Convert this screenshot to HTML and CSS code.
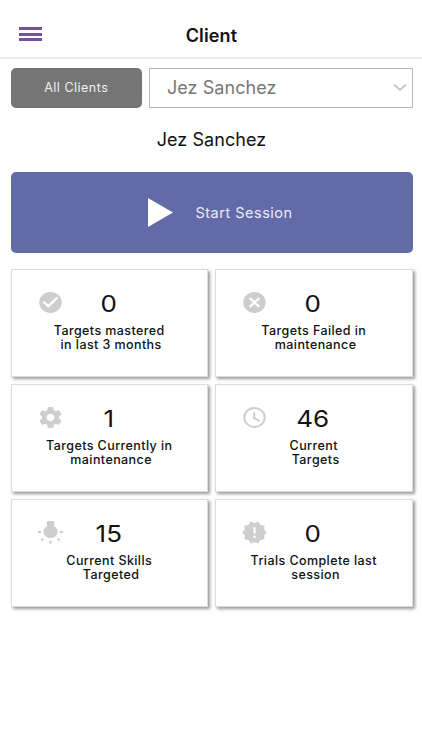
FILE: index.html
```
<!DOCTYPE html>
<html lang="en">
<head>
    <meta charset="UTF-8">
    <meta name="viewport" content="width=device-width, initial-scale=1.0">
    <title>Client</title>
    <link rel="stylesheet" href="styles.css">
</head>
<body>

    <header class="header">
        <button class="menu-button" aria-label="Menu">
            <span></span>
            <span></span>
            <span></span>
        </button>
        <h1>Client</h1>
    </header>

    <main class="container">
        <div class="client-bar">
            <button class="all-clients">All Clients</button>
            <div class="client-select">
                <span>Jez Sanchez</span>
                <svg class="chevron" viewBox="0 0 14 9"><path d="M1 1.5l6 5.5 6-5.5"/></svg>
            </div>
        </div>

        <h2 class="client-name">Jez Sanchez</h2>

        <button class="start-button">
            <svg class="play" viewBox="0 0 25 29" preserveAspectRatio="none"><path d="M0 0l25 14.5L0 29z"/></svg>
            <span>Start Session</span>
        </button>

        <section class="stats">
            <div class="card">
                <div class="card-top">
                    <svg class="icon" viewBox="0 0 24 24" preserveAspectRatio="none"><path d="M12 2C6.48 2 2 6.48 2 12s4.480 10 10 10 10-4.480 10-10S17.520 2 12 2zm-2 15l-5-5 1.410-1.410L10 14.170l7.590-7.590L19 8l-9 9z"/></svg>
                    <span class="number">0</span>
                </div>
                <p class="label">Targets mastered<br>&nbsp;in last 3 months</p>
            </div>

            <div class="card">
                <div class="card-top">
                    <svg class="icon" viewBox="0 0 24 24" preserveAspectRatio="none"><path d="M12 2C6.470 2 2 6.470 2 12s4.470 10 10 10 10-4.470 10-10S17.530 2 12 2zm5 13.590L15.590 17 12 13.410 8.410 17 7 15.590 10.590 12 7 8.410 8.410 7 12 10.590 15.590 7 17 8.410 13.410 12 17 15.590z"/></svg>
                    <span class="number">0</span>
                </div>
                <p class="label">Targets Failed in<br>&nbsp;maintenance</p>
            </div>

            <div class="card">
                <div class="card-top">
                    <svg class="icon" viewBox="0 0 24 24" preserveAspectRatio="none"><path d="M19.430 12.980c.04-.32.07-.64.07-.98s-.03-.66-.07-.98l2.110-1.650c.19-.15.24-.42.12-.64l-2-3.460c-.12-.22-.39-.3-.61-.22l-2.490 1c-.52-.4-1.080-.73-1.690-.98l-.38-2.650C14.460 2.180 14.250 2 14 2h-4c-.25 0-.46.18-.49.42l-.38 2.650c-.61.25-1.170.59-1.690.98l-2.490-1c-.23-.09-.49 0-.61.22l-2 3.460c-.13.22-.07.49.12.64l2.110 1.650c-.04.32-.07.65-.07.98s.03.66.07.98l-2.110 1.650c-.19.15-.24.42-.12.64l2 3.460c.12.22.39.3.61.22l2.490-1c.52.4 1.080.73 1.690.98l.38 2.650c.03.24.24.42.49.42h4c.25 0 .46-.18.49-.42l.38-2.650c.61-.25 1.170-.59 1.690-.98l2.490 1c.23.09.49 0 .61-.22l2-3.460c.12-.22.07-.49-.12-.64l-2.110-1.650zM12 15.500c-1.930 0-3.500-1.570-3.500-3.500s1.570-3.500 3.500-3.500 3.500 1.570 3.500 3.500-1.570 3.500-3.500 3.500z"/></svg>
                    <span class="number">1</span>
                </div>
                <p class="label">Targets Currently in<br>&nbsp;maintenance</p>
            </div>

            <div class="card">
                <div class="card-top">
                    <svg class="icon outline" viewBox="0 0 24 24" preserveAspectRatio="none"><circle cx="12" cy="12" r="9.100"/><path d="M11.750 7v5.600l4.600 2.800"/></svg>
                    <span class="number">46</span>
                </div>
                <p class="label">Current<br>&nbsp;Targets</p>
            </div>

            <div class="card">
                <div class="card-top">
                    <svg class="icon" viewBox="0 0 24 24" preserveAspectRatio="none">
                        <path d="M8.800 1h6.400v5.100c1.900 1 3.100 2.900 3.100 5a6.300 6.300 0 0 1-12.600 0c0-2.100 1.200-4 3.100-5z"/>
                        <path d="M.8 10.500h2.700v2H.8zM20.500 10.500h2.700v2h-2.700zM11 19.800h2v3h-2zM4.900 17.200l1.400 1.400-1.800 1.700-1.400-1.400zM19.100 17.200l1.800 1.700-1.400 1.400-1.800-1.700z"/>
                    </svg>
                    <span class="number">15</span>
                </div>
                <p class="label">Current Skills<br>&nbsp;Targeted</p>
            </div>

            <div class="card">
                <div class="card-top">
                    <svg class="icon" viewBox="0 0 24 24" preserveAspectRatio="none"><path d="M23 12l-2.440-2.780.34-3.680-3.610-.82-1.890-3.180L12 3 8.600 1.540 6.710 4.720l-3.610.81.34 3.680L1 12l2.440 2.780-.34 3.690 3.610.82 1.890 3.180L12 21l3.400 1.460 1.890-3.180 3.610-.82-.34-3.680L23 12zm-10 5h-2v-2h2v2zm0-4h-2V7h2v6z"/></svg>
                    <span class="number">0</span>
                </div>
                <p class="label">Trials Complete last<br>&nbsp;session</p>
            </div>
        </section>
    </main>

</body>
</html>
```
FILE: styles.css
```
/* Reset default styles */
* {
    margin: 0;
    padding: 0;
    box-sizing: border-box;
}

body {
    min-height: 100vh;
    font-family: Inter, "Liberation Sans", sans-serif;
    background: #fff;
    color: #111;
}

button {
    border: none;
    font-family: inherit;
}

/* Header */
.header {
    display: grid;
    grid-template-columns: 48px 1fr 47px;
    align-items: center;
    height: 59px;
    padding-top: 13px;
    border-bottom: 2px solid #e9e9e9;
}

.header h1 {
    font-size: 18px;
    font-weight: 600;
    letter-spacing: 0.15px;
    text-align: center;
}

.menu-button {
    display: flex;
    flex-direction: column;
    gap: 2.500px;
    width: 23px;
    margin: 0 0 2px 19px;
    background: none;
}

.menu-button span {
    height: 3px;
    background: #7650a0;
}

/* Client picker */
.container {
    padding: 8.500px 9.500px 20px 10.500px;
}

.client-bar {
    display: grid;
    grid-template-columns: 131.500px 1fr;
    gap: 7px;
    height: 40.500px;
}

.all-clients {
    background: #757575;
    border-radius: 5px;
    color: #f0f0f0;
    font-size: 12.500px;
    letter-spacing: 0.5px;
}

.client-select {
    display: flex;
    align-items: center;
    justify-content: space-between;
    padding: 0 5px 1px 17px;
    border: 1px solid #b9b9b9;
    color: #777;
    font-size: 18px;
    letter-spacing: 0.05px;
}

.chevron {
    width: 14px;
    height: 9px;
    fill: none;
    stroke: #c8c8c8;
    stroke-width: 2;
}

.client-name {
    height: 63.500px;
    line-height: 63px;
    font-size: 18px;
    font-weight: 400;
    letter-spacing: 0.05px;
    text-align: center;
}

/* Start button */
.start-button {
    display: flex;
    align-items: center;
    width: 100%;
    height: 81px;
    padding-left: 137px;
    gap: 23px;
    background: #626ba7;
    border-radius: 5px;
    color: #e9eaff;
    font-size: 14.500px;
    letter-spacing: 0.5px;
}

.play {
    width: 25px;
    height: 29px;
    fill: #fff;
}

/* Stat cards */
.stats {
    display: grid;
    grid-template-columns: 1fr 1fr;
    gap: 7px;
    margin-top: 16.700px;
}

.card {
    height: 108.100px;
    padding-top: 19.500px;
    background: #fff;
    border: 1px solid #dcdcdc;
    box-shadow: 2px 2px 3px rgba(0, 0, 0, 0.4);
    text-align: center;
}

.card-top {
    display: grid;
    grid-template-columns: 52px 1fr 54px;
    align-items: center;
    height: 28px;
}

.icon {
    width: 27px;
    height: 25px;
    margin: 0 0 4px 25px;
    fill: #cecece;
}

.outline {
    fill: none;
    stroke: #cecece;
    stroke-width: 1.800;
}

.number {
    font-size: 23px;
    line-height: 28px;
    transform: scaleX(1.13);
}

.label {
    margin-top: 6px;
    font-size: 12.500px;
    font-weight: 500;
    line-height: 14px;
    letter-spacing: 0.42px;
}
```
